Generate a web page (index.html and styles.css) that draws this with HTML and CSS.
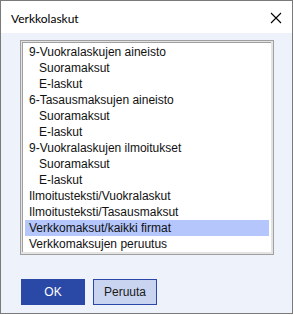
FILE: index.html
```html
<!DOCTYPE html>
<html>
<head>
<meta charset="utf-8">
<link rel="stylesheet" href="styles.css">
</head>
<body>
<div class="window">
  <div class="titlebar">
    <span class="title">Verkkolaskut</span>
    <svg class="close" width="12" height="12" viewBox="0 0 12 12"><path d="M1 1 L11 11 M11 1 L1 11" stroke="#000" stroke-width="1.1" fill="none"/></svg>
  </div>
  <div class="client">
    <div class="listbox">
      <div class="list">
        <div class="item">9-Vuokralaskujen aineisto</div>
        <div class="item sub">Suoramaksut</div>
        <div class="item sub">E-laskut</div>
        <div class="item">6-Tasausmaksujen aineisto</div>
        <div class="item sub">Suoramaksut</div>
        <div class="item sub">E-laskut</div>
        <div class="item">9-Vuokralaskujen ilmoitukset</div>
        <div class="item sub">Suoramaksut</div>
        <div class="item sub">E-laskut</div>
        <div class="item">Ilmoitusteksti/Vuokralaskut</div>
        <div class="item">Ilmoitusteksti/Tasausmaksut</div>
        <div class="item selected">Verkkomaksut/kaikki firmat</div>
        <div class="item">Verkkomaksujen peruutus</div>
      </div>
    </div>
    <div class="buttons">
      <button class="btn primary">OK</button>
      <button class="btn secondary">Peruuta</button>
    </div>
  </div>
</div>
</body>
</html>
```

FILE: styles.css
```css
html, body {
  margin: 0;
  padding: 0;
  background: #ffffff;
}
.window {
  width: 293px;
  height: 314px;
  box-sizing: border-box;
  border: 1px solid #7a7a7a;
  display: flex;
  flex-direction: column;
  background: #eef2fa;
}
.titlebar {
  height: 32px;
  flex: none;
  background: #ffffff;
  display: flex;
  align-items: center;
  justify-content: space-between;
  padding: 0 10px 0 10px;
  box-sizing: border-box;
}
.title {
  font-family: Lato, "Noto Sans", sans-serif;
  font-size: 12px;
  color: #000;
  position: relative;
  top: 1px;
}
.close {
  display: block;
  margin-right: 0px;
  position: relative;
  top: 1px;
}
.client {
  flex: 1;
  padding: 7px 0 0 19px;
}
.listbox {
  width: 254px;
  height: 215px;
  box-sizing: border-box;
  border: 1px solid #a0a0a0;
  background: #e3e3e3;
  padding: 1px 2px 2px 1px;
}
.list {
  height: 100%;
  box-sizing: border-box;
  background: #ffffff;
  border-top: 1px solid #a0a0a0;
  border-left: 1px solid #a0a0a0;
  padding: 1px 2px 0 2px;
}
.item {
  height: 16px;
  line-height: 16px;
  padding-left: 4px;
  font-family: "Liberation Sans", Arial, sans-serif;
  font-size: 12px;
  color: #111;
  white-space: nowrap;
}
.item.sub {
  padding-left: 14px;
}
.item.selected {
  background: #b4c6fb;
}
.buttons {
  display: flex;
  gap: 8px;
  margin-top: 24px;
  padding-left: 1px;
}
.btn {
  width: 64px;
  height: 26px;
  box-sizing: border-box;
  font-family: "Liberation Sans", Arial, sans-serif;
  font-size: 12px;
  padding: 0;
  margin: 0;
}
.primary {
  background: #2a48a6;
  color: #ffffff;
  border: 1px solid #2a48a6;
}
.secondary {
  background: #c9d4f0;
  color: #1a1a1a;
  border: 1px solid #2b48a8;
}
```
